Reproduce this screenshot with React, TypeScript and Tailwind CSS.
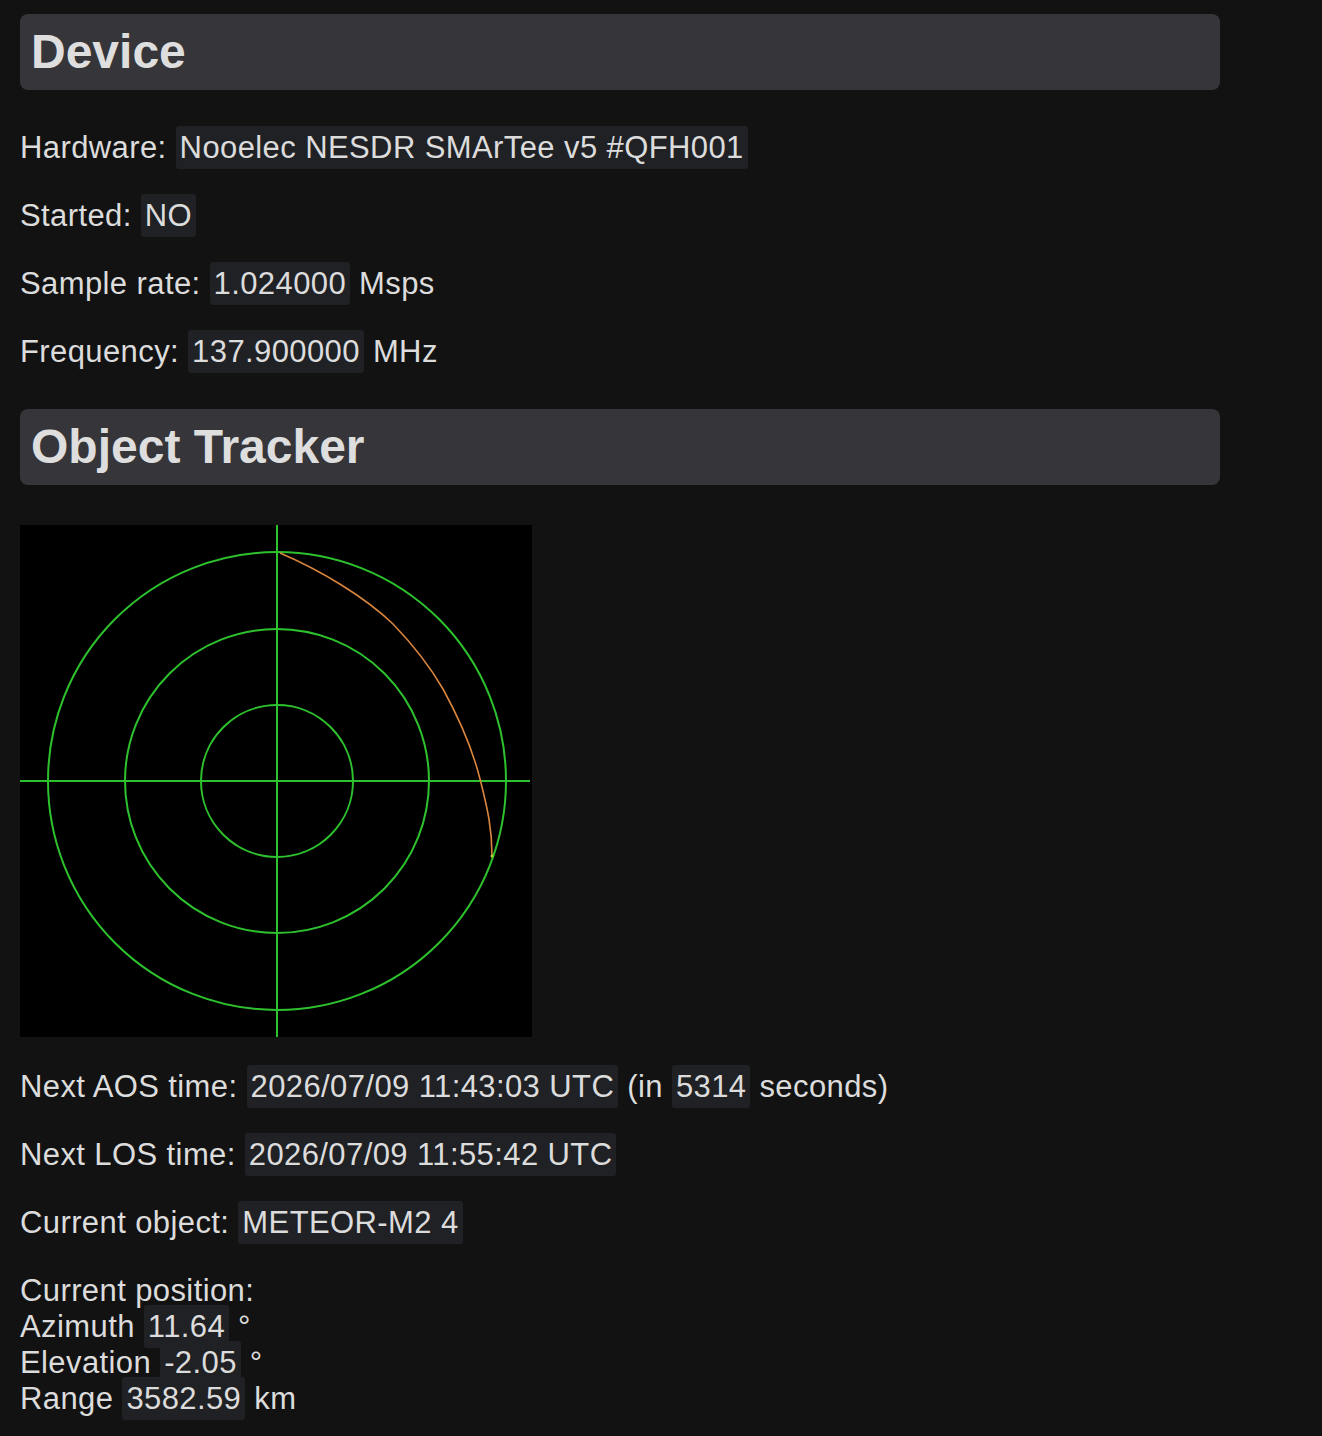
import React from "react";

const font = { fontFamily: '"Liberation Sans", Arial, sans-serif' };

function Val({ children }: { children: React.ReactNode }) {
  return <span className="rounded-[3px] bg-[#202124] px-[4px] py-[4px]">{children}</span>;
}

function Heading({ title }: { title: string }) {
  return (
    <h1 className="rounded-lg bg-[#36363a] px-[11px] py-[10px] text-[48px] font-bold leading-[56px] tracking-normal text-[#dedede]">
      {title}
    </h1>
  );
}

function Radar() {
  // track points (canvas pixels)
  const track = "M260 28 C300 45 345 72 373 99 C398 125 412 145 423 164 C440 195 452 222 460 254 C468 285 472 305 472 330";
  return (
    <svg width="512" height="512" viewBox="0 0 512 512" className="block bg-black">
      <g stroke="#2ec12e" strokeWidth="2" fill="none">
        <line x1="257" y1="0" x2="257" y2="512" />
        <line x1="0" y1="256" x2="510" y2="256" />
        <circle cx="257" cy="256" r="76" />
        <circle cx="257" cy="256" r="152" />
        <circle cx="257" cy="256" r="229" />
      </g>
      <path d={track} stroke="#d9853d" strokeWidth="1.6" fill="none" />
      <circle cx="472" cy="331" r="1.5" fill="#b8d63a" />
    </svg>
  );
}

export default function App() {
  return (
    <div className="min-h-[1436px] bg-[#121212] px-5 pt-[14px] text-[31px] leading-[36px] tracking-[0.4px] text-[#dcdcdc]" style={font}>
      <div className="w-[1200px]">
        <Heading title="Device" />
        <div className="mt-10 flex flex-col gap-8">
          <p>
            Hardware: <Val>Nooelec NESDR SMArTee v5 #QFH001</Val>
          </p>
          <p>
            Started: <Val>NO</Val>
          </p>
          <p>
            Sample rate: <Val>1.024000</Val> Msps
          </p>
          <p>
            Frequency: <Val>137.900000</Val> MHz
          </p>
        </div>

        <div className="mt-[39px]">
          <Heading title="Object Tracker" />
        </div>

        <div className="mt-10">
          <Radar />
        </div>

        <div className="mt-8 flex flex-col gap-8">
          <p>
            Next AOS time: <Val>2026/07/09 11:43:03 UTC</Val> (in <Val>5314</Val> seconds)
          </p>
          <p>
            Next LOS time: <Val>2026/07/09 11:55:42 UTC</Val>
          </p>
          <p>
            Current object: <Val>METEOR-M2 4</Val>
          </p>
          <p>
            Current position:
            <br />
            Azimuth <Val>11.64</Val> °
            <br />
            Elevation <Val>-2.05</Val> °
            <br />
            Range <Val>3582.59</Val> km
          </p>
        </div>
      </div>
    </div>
  );
}
